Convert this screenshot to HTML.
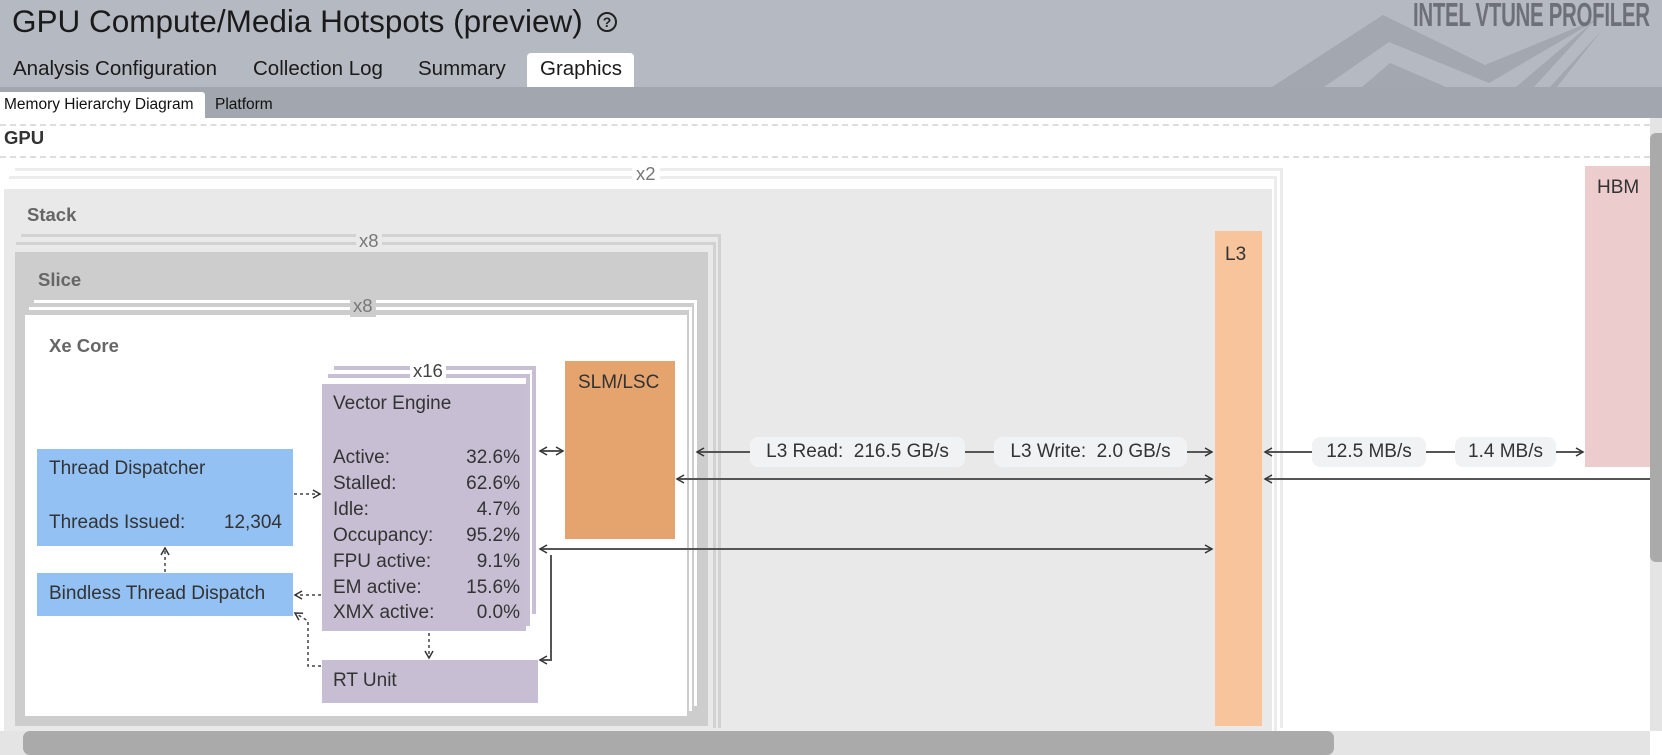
<!DOCTYPE html>
<html><head><meta charset="utf-8">
<style>
*{margin:0;padding:0;box-sizing:border-box}
body{width:1662px;height:755px;overflow:hidden;background:#fff;font-family:"Liberation Sans",Arial,sans-serif;position:relative;color:#222}
.a{position:absolute;white-space:nowrap}
.lbl{color:#666;font-weight:bold;font-size:18.5px}
.mt{font-size:19px;color:#333}
.pill{position:absolute;background:#f1f2f4;border-radius:8px;height:30px;line-height:30px;font-size:19px;color:#333;text-align:center}
</style></head><body>
<div class="a" style="left:0;top:0;width:1662px;height:87px;background:#b5b9c1"></div>
<svg class="a" style="left:0;top:0" width="1662" height="118">
<polygon points="1272,87 1383,15 1485,65 1602,17 1489,83 1389,42 1324,87" fill="#a3a7b0"/>
<polygon points="1362,87 1390,63 1446,87" fill="#a3a7b0"/>
<polygon points="1516,87 1595,20 1534,87" fill="#a3a7b0"/>
<polygon points="1550,87 1602,30 1557,87" fill="#a3a7b0"/>
</svg>
<div class="a" style="left:1413px;top:-4px;font-size:33px;font-weight:bold;color:#6d7079;font-family:'Liberation Sans Narrow','Liberation Sans',sans-serif;transform:scaleX(0.62);transform-origin:left top;letter-spacing:-0.5px">INTEL VTUNE PROFILER</div>
<div class="a" style="left:12px;top:3px;font-size:31.5px;color:#1a1a1a">GPU Compute/Media Hotspots (preview)</div>
<div class="a" style="left:597px;top:12px;width:20px;height:20px;border:2px solid #222;border-radius:50%;font-size:14px;font-weight:bold;text-align:center;line-height:16px">?</div>
<div class="a" style="left:527px;top:53px;width:107px;height:34px;background:#fff;border-radius:4px 4px 0 0"></div>
<div class="a" style="left:13px;top:57px;font-size:20.5px;color:#1a1a1a">Analysis Configuration</div>
<div class="a" style="left:253px;top:57px;font-size:20.5px;color:#1a1a1a">Collection Log</div>
<div class="a" style="left:418px;top:57px;font-size:20.5px;color:#1a1a1a">Summary</div>
<div class="a" style="left:540px;top:57px;font-size:20.5px;color:#1a1a1a">Graphics</div>
<div class="a" style="left:0;top:87px;width:1662px;height:31px;background:#a2a6ae"></div>
<div class="a" style="left:0;top:92px;width:205px;height:26px;background:#fff;border-radius:0 3px 0 0"></div>
<div class="a" style="left:4px;top:96px;font-size:15.5px;color:#111">Memory Hierarchy Diagram</div>
<div class="a" style="left:215px;top:96px;font-size:15.5px;color:#111">Platform</div>
<div class="a" style="left:0;top:124px;width:1650px;border-top:2px dashed #ddd"></div>
<div class="a" style="left:4px;top:127px;font-size:18.5px;font-weight:bold;color:#333">GPU</div>
<div class="a" style="left:0;top:156px;width:1650px;border-top:2px dashed #ddd"></div>
<div class="a" style="left:15px;top:168px;width:1268px;height:560px;border:3px solid #ececec;border-bottom:none;border-left:none"></div>
<div class="a" style="left:9px;top:176px;width:1268px;height:556px;border:3px solid #ececec;border-bottom:none;border-left:none"></div>
<div class="a" style="left:4px;top:189px;width:1268px;height:542px;background:#e9e9e9"></div>
<div class="a" style="left:632px;top:163px;background:#fff;padding:0 4px;font-size:18.5px;color:#777">x2</div>
<div class="a lbl" style="left:27px;top:204px">Stack</div>
<div class="a" style="left:21px;top:234px;width:700px;height:494px;border:3px solid #d2d2d2;border-bottom:none;border-left:none"></div>
<div class="a" style="left:16px;top:242px;width:700px;height:486px;border:3px solid #d2d2d2;border-bottom:none;border-left:none"></div>
<div class="a" style="left:15px;top:252px;width:693px;height:474px;background:#cdcdcd"></div>
<div class="a" style="left:356px;top:230px;background:#e9e9e9;padding:0 3px;font-size:18.5px;color:#777">x8</div>
<div class="a lbl" style="left:38px;top:269px">Slice</div>
<div class="a" style="left:34px;top:300px;width:663px;height:406px;border:3px solid #fff;border-bottom:none;border-left:none"></div>
<div class="a" style="left:29px;top:307px;width:663px;height:404px;border:3px solid #fff;border-bottom:none;border-left:none"></div>
<div class="a" style="left:25px;top:315px;width:662px;height:401px;background:#fff"></div>
<div class="a" style="left:350px;top:295px;background:#cdcdcd;padding:0 3px;font-size:18.5px;color:#777">x8</div>
<div class="a lbl" style="left:49px;top:335px">Xe Core</div>
<div class="a" style="left:334px;top:366px;width:202px;height:248px;border:4px solid #c8bfd4;border-bottom:none;border-left:none"></div>
<div class="a" style="left:328px;top:374px;width:202px;height:252px;border:4px solid #c8bfd4;border-bottom:none;border-left:none"></div>
<div class="a" style="left:410px;top:360px;background:#fff;padding:0 3px;font-size:18.5px;color:#444">x16</div>
<div class="a" style="left:322px;top:384px;width:204px;height:247px;background:#c8bed4"></div>
<div class="a mt" style="left:333px;top:393px">Vector Engine</div>
<div class="a mt" style="left:333px;top:445px;line-height:25.9px">Active:<br>Stalled:<br>Idle:<br>Occupancy:<br>FPU active:<br>EM active:<br>XMX active:</div>
<div class="a mt" style="left:430px;top:445px;width:90px;text-align:right;line-height:25.9px">32.6%<br>62.6%<br>4.7%<br>95.2%<br>9.1%<br>15.6%<br>0.0%</div>
<div class="a" style="left:37px;top:449px;width:256px;height:97px;background:#93c1f3"></div>
<div class="a mt" style="left:49px;top:458px">Thread Dispatcher</div>
<div class="a mt" style="left:49px;top:512px">Threads Issued:</div>
<div class="a mt" style="left:190px;top:512px;width:92px;text-align:right">12,304</div>
<div class="a" style="left:37px;top:573px;width:256px;height:43px;background:#93c1f3"></div>
<div class="a mt" style="left:49px;top:583px">Bindless Thread Dispatch</div>
<div class="a" style="left:565px;top:361px;width:110px;height:178px;background:#e5a46e"></div>
<div class="a mt" style="left:578px;top:372px">SLM/LSC</div>
<div class="a" style="left:322px;top:660px;width:216px;height:43px;background:#c8bed4"></div>
<div class="a mt" style="left:333px;top:670px">RT Unit</div>
<div class="a" style="left:1215px;top:231px;width:47px;height:495px;background:#f8c49b"></div>
<div class="a mt" style="left:1225px;top:244px">L3</div>
<div class="a" style="left:1585px;top:166px;width:65px;height:301px;background:#eccccc"></div>
<div class="a mt" style="left:1597px;top:177px">HBM</div>
<svg class="a" style="left:0;top:0" width="1662" height="755" fill="none">
<defs>
<marker id="m" markerWidth="10" markerHeight="10" refX="8" refY="5" orient="auto-start-reverse" markerUnits="userSpaceOnUse"><path d="M1,1 L8,5 L1,9" stroke="#333" stroke-width="1.5" fill="none"/></marker>
</defs>
<g stroke="#555" stroke-width="2">
<line x1="697" y1="452" x2="750" y2="452" marker-start="url(#m)"/>
<line x1="965" y1="452" x2="994" y2="452"/>
<line x1="1187" y1="452" x2="1212" y2="452" marker-end="url(#m)"/>
<line x1="1265" y1="452" x2="1312" y2="452" marker-start="url(#m)"/>
<line x1="1426" y1="452" x2="1455" y2="452"/>
<line x1="1556" y1="452" x2="1583" y2="452" marker-end="url(#m)"/>
<line x1="677" y1="479" x2="1212" y2="479" marker-start="url(#m)" marker-end="url(#m)"/>
<line x1="1265" y1="479" x2="1650" y2="479" marker-start="url(#m)"/>
<line x1="540" y1="549" x2="1212" y2="549" marker-start="url(#m)" marker-end="url(#m)"/>
<line x1="540" y1="451" x2="563" y2="451" marker-start="url(#m)" marker-end="url(#m)"/>
<path d="M551,555 V660 H540" marker-end="url(#m)"/>
</g>
<g stroke="#444" stroke-width="1.5" stroke-dasharray="3,3">
<line x1="294" y1="494" x2="320" y2="494" marker-end="url(#m)"/>
<line x1="165" y1="572" x2="165" y2="548" marker-end="url(#m)"/>
<line x1="321" y1="595" x2="295" y2="595" marker-end="url(#m)"/>
<line x1="429" y1="633" x2="429" y2="658" marker-end="url(#m)"/>
<path d="M321,666 H308 V621 L295,613" marker-end="url(#m)"/>
</g>
</svg>
<div class="pill" style="left:750px;top:437px;width:215px">L3 Read:&nbsp; 216.5 GB/s</div>
<div class="pill" style="left:994px;top:437px;width:193px">L3 Write:&nbsp; 2.0 GB/s</div>
<div class="pill" style="left:1312px;top:437px;width:114px">12.5 MB/s</div>
<div class="pill" style="left:1455px;top:437px;width:101px">1.4 MB/s</div>
<div class="a" style="left:1650px;top:118px;width:12px;height:613px;background:#e4e4e4"></div>
<div class="a" style="left:1650px;top:133px;width:12px;height:429px;background:#aaa;border-radius:6px 0 0 6px"></div>
<div class="a" style="left:0;top:731px;width:1650px;height:24px;background:#e4e4e4"></div>
<div class="a" style="left:23px;top:731px;width:1311px;height:24px;background:#aaa;border-radius:7px"></div>
</body></html>
